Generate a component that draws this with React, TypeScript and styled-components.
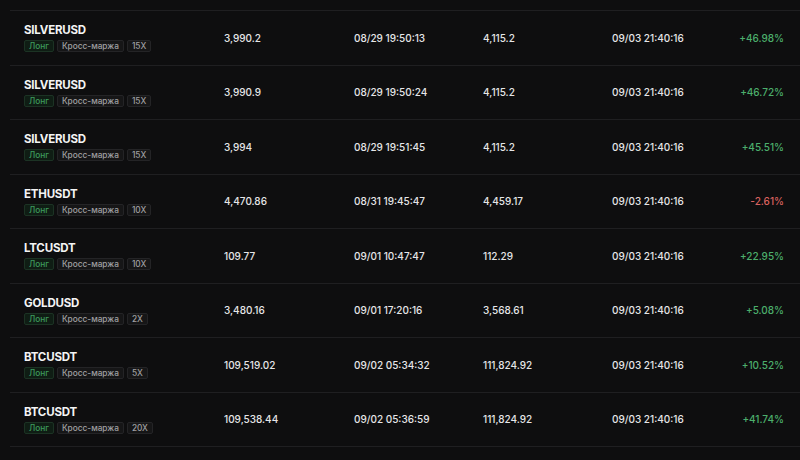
import React from 'react';
import styled, { createGlobalStyle } from 'styled-components';

type Position = {
  symbol: string;
  leverage: string;
  entry: string;
  opened: string;
  exit: string;
  closed: string;
  pnl: string;
};

const positions: Position[] = [
  { symbol: 'SILVERUSD', leverage: '15X', entry: '3,990.2', opened: '08/29 19:50:13', exit: '4,115.2', closed: '09/03 21:40:16', pnl: '+46.98%' },
  { symbol: 'SILVERUSD', leverage: '15X', entry: '3,990.9', opened: '08/29 19:50:24', exit: '4,115.2', closed: '09/03 21:40:16', pnl: '+46.72%' },
  { symbol: 'SILVERUSD', leverage: '15X', entry: '3,994', opened: '08/29 19:51:45', exit: '4,115.2', closed: '09/03 21:40:16', pnl: '+45.51%' },
  { symbol: 'ETHUSDT', leverage: '10X', entry: '4,470.86', opened: '08/31 19:45:47', exit: '4,459.17', closed: '09/03 21:40:16', pnl: '-2.61%' },
  { symbol: 'LTCUSDT', leverage: '10X', entry: '109.77', opened: '09/01 10:47:47', exit: '112.29', closed: '09/03 21:40:16', pnl: '+22.95%' },
  { symbol: 'GOLDUSD', leverage: '2X', entry: '3,480.16', opened: '09/01 17:20:16', exit: '3,568.61', closed: '09/03 21:40:16', pnl: '+5.08%' },
  { symbol: 'BTCUSDT', leverage: '5X', entry: '109,519.02', opened: '09/02 05:34:32', exit: '111,824.92', closed: '09/03 21:40:16', pnl: '+10.52%' },
  { symbol: 'BTCUSDT', leverage: '20X', entry: '109,538.44', opened: '09/02 05:36:59', exit: '111,824.92', closed: '09/03 21:40:16', pnl: '+41.74%' },
];

export default function App() {
  return (
    <>
      <GlobalStyle />
      <Page>
        <Table>
          {positions.map((p, i) => (
            <Row key={i}>
              <NameCell>
                <Symbol>{p.symbol}</Symbol>
                <Tags>
                  <Tag $long>Лонг</Tag>
                  <Tag>Кросс-маржа</Tag>
                  <Tag>{p.leverage}</Tag>
                </Tags>
              </NameCell>
              <Value>{p.entry}</Value>
              <Value>{p.opened}</Value>
              <Value>{p.exit}</Value>
              <Value>{p.closed}</Value>
              <Pnl $negative={p.pnl.startsWith('-')}>{p.pnl}</Pnl>
            </Row>
          ))}
        </Table>
      </Page>
    </>
  );
}

const GlobalStyle = createGlobalStyle`
  html, body {
    margin: 0;
    padding: 0;
    background: #0e0e0f;
  }
  body {
    font-family: Inter, 'Noto Sans', sans-serif;
    -webkit-font-smoothing: antialiased;
  }
`;

const Page = styled.div`
  width: 800px;
  height: 460px;
  padding-top: 10px;
  padding-left: 10px;
  box-sizing: border-box;
  background: #0e0e0f;
  overflow: hidden;
`;

const Table = styled.div`
  border-top: 1px solid #1f1f21;
`;

const Row = styled.div`
  display: grid;
  grid-template-columns: 200px 130px 129px 129px 1fr auto;
  align-items: center;
  height: 54.5px;
  box-sizing: border-box;
  padding: 0 16px 0 14px;
  border-bottom: 1px solid #1f1f21;
`;

const NameCell = styled.div`
  display: flex;
  flex-direction: column;
  gap: 3px;
`;

const Symbol = styled.div`
  font-size: 11.5px;
  line-height: 14px;
  font-weight: 700;
  letter-spacing: -0.2px;
  color: #f4f4f4;
`;

const Tags = styled.div`
  display: flex;
  gap: 3px;
`;

const Tag = styled.span<{ $long?: boolean }>`
  height: 12px;
  box-sizing: border-box;
  display: inline-flex;
  align-items: center;
  padding: 0 4px;
  font-size: 8.3px;
  font-weight: 500;
  border-radius: 2px;
  color: ${(p) => (p.$long ? '#3d9a5c' : '#a0a0a2')};
  background: ${(p) => (p.$long ? '#0f1d14' : '#161617')};
  border: 1px solid ${(p) => (p.$long ? '#1c3324' : '#242426')};
`;

const Value = styled.div`
  font-size: 10px;
  font-weight: 500;
  color: #e6e6e8;
`;

const Pnl = styled.div<{ $negative?: boolean }>`
  font-size: 10px;
  font-weight: 500;
  text-align: right;
  color: ${(p) => (p.$negative ? '#d9625f' : '#4cae6c')};
`;
